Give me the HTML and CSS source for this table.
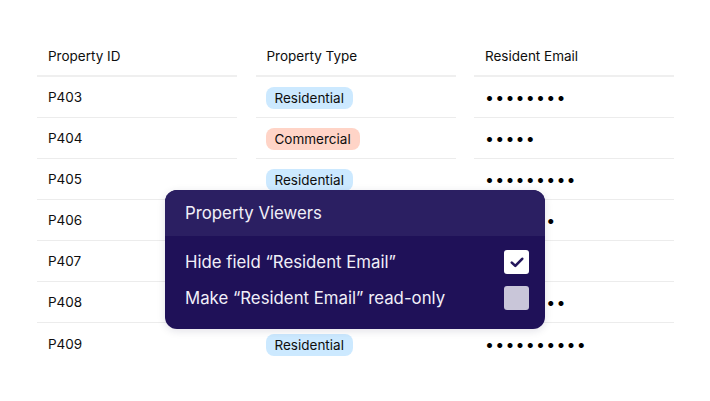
FILE: index.html
```html
<!DOCTYPE html>
<html>
<head>
<meta charset="utf-8">
<link rel="stylesheet" href="styles.css">
</head>
<body>
<div class="stage">
  <div class="table">
    <div class="cell head">Property ID</div>
    <div class="cell head">Property Type</div>
    <div class="cell head">Resident Email</div>

    <div class="cell">P403</div>
    <div class="cell"><span class="badge res">Residential</span></div>
    <div class="cell dots">••••••••</div>

    <div class="cell">P404</div>
    <div class="cell"><span class="badge com">Commercial</span></div>
    <div class="cell dots">•••••</div>

    <div class="cell">P405</div>
    <div class="cell"><span class="badge res">Residential</span></div>
    <div class="cell dots">•••••••••</div>

    <div class="cell">P406</div>
    <div class="cell"><span class="badge com">Commercial</span></div>
    <div class="cell dots">•••••••</div>

    <div class="cell">P407</div>
    <div class="cell"><span class="badge res">Residential</span></div>
    <div class="cell dots">•••••</div>

    <div class="cell">P408</div>
    <div class="cell"><span class="badge com">Commercial</span></div>
    <div class="cell dots">••••••••</div>

    <div class="cell last">P409</div>
    <div class="cell last"><span class="badge res">Residential</span></div>
    <div class="cell last dots">••••••••••</div>
  </div>

  <div class="popover">
    <div class="pop-head">Property Viewers</div>
    <div class="pop-body">
      <div class="opt">
        <span>Hide field “Resident Email”</span>
        <span class="box checked">
          <svg width="14" height="11" viewBox="0 0 14 11"><path d="M1.8 5.6 L5.3 8.9 L12.2 1.8" fill="none" stroke="#24175c" stroke-width="2.6" stroke-linecap="round" stroke-linejoin="round"/></svg>
        </span>
      </div>
      <div class="opt">
        <span>Make “Resident Email” read-only</span>
        <span class="box"></span>
      </div>
    </div>
  </div>
</div>
</body>
</html>
```

FILE: styles.css
```css
* { box-sizing: border-box; }
html, body {
  margin: 0;
  padding: 0;
  background: #ffffff;
}
body {
  font-family: Inter, "Noto Sans", sans-serif;
  color: #0e0e0e;
  width: 710px;
  height: 401px;
  overflow: hidden;
}
.stage {
  position: relative;
  padding: 36px 0 0 37px;
}
.table {
  display: grid;
  grid-template-columns: 200px 200px 200px;
  column-gap: 18.5px;
  grid-auto-rows: 41px;
}
.cell {
  display: flex;
  align-items: center;
  padding-left: 11px;
  font-size: 13.5px;
  border-bottom: 1px solid #ececec;
}
.cell.head {
  border-bottom: 2px solid #efefef;
  padding-top: 1px;
}
.cell.last { border-bottom: none; }
.badge {
  display: inline-flex;
  align-items: center;
  height: 22px;
  padding: 0 9px;
  border-radius: 8px;
  margin-left: -1px;
  font-size: 13.5px;
  margin-top: 2px;
}
.badge.res { background: #cce9ff; }
.badge.com { background: #ffd4c7; }
.dots {
  letter-spacing: 1.2px;
  font-size: 16px;
  color: #000;
}
.popover {
  position: absolute;
  left: 165px;
  top: 190px;
  width: 380px;
  height: 139px;
  border-radius: 12px;
  overflow: hidden;
  background: #1f1158;
  color: #f1eff8;
  box-shadow: 0 2px 8px rgba(20, 10, 60, 0.12);
}
.pop-head {
  height: 46px;
  background: #2b1f62;
  display: flex;
  align-items: center;
  padding-left: 20px;
  font-size: 16.8px;
}
.pop-body {
  display: flex;
  flex-direction: column;
  padding: 14px 16px 0 20px;
  gap: 12px;
}
.opt {
  display: flex;
  align-items: center;
  justify-content: space-between;
  height: 24px;
  font-size: 16.8px;
}
.box {
  width: 25px;
  height: 24px;
  border-radius: 3px;
  background: #c9c6d9;
  display: flex;
  align-items: center;
  justify-content: center;
}
.box.checked { background: #ffffff; }
```
